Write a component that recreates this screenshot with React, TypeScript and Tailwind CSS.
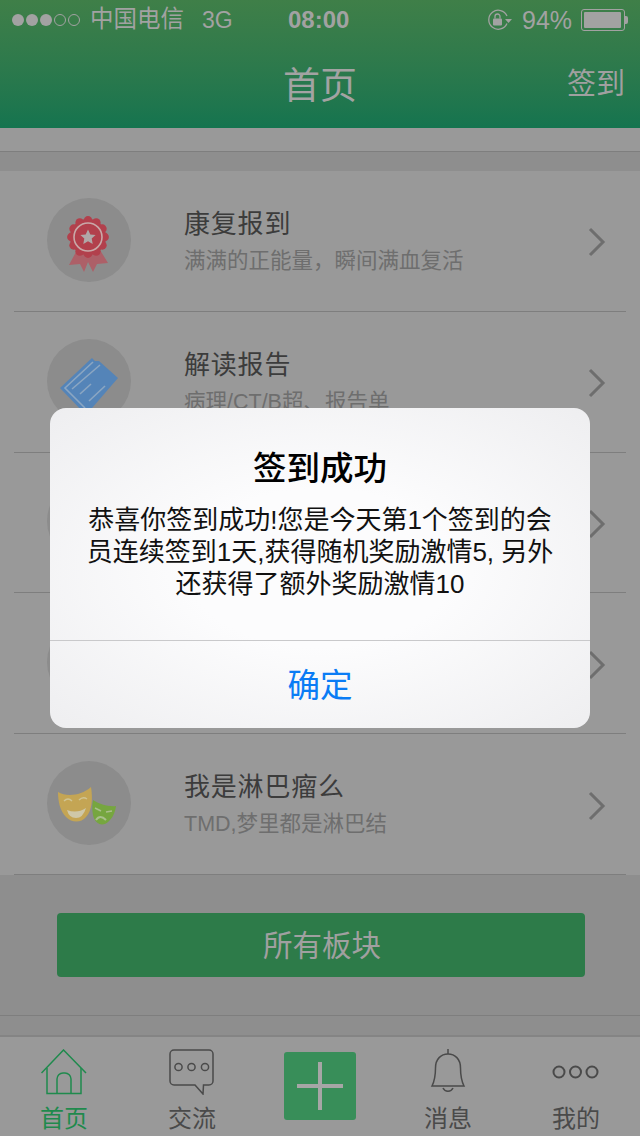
import React from 'react';

const FONT = "font-['Liberation_Sans','Noto_Sans_CJK_SC',sans-serif]";

function MedalIcon() {
  const bumps = Array.from({ length: 12 }, (_, i) => (i * Math.PI) / 6);
  return (
    <svg width="84" height="84" viewBox="0 0 84 84">
      <polygon points="30,52 22,67 33,66 37,74 41,64 46,74 50,66 61,65 53,52" fill="#ad6068" />
      <circle cx="41" cy="39" r="18" fill="#b2404c" />
      {bumps.map((a, i) => (
        <circle key={i} cx={41 + 16.5 * Math.cos(a)} cy={39 + 16.5 * Math.sin(a)} r="4.4" fill="#b2404c" />
      ))}
      <circle cx="41" cy="39" r="14" fill="none" stroke="#c9a8a8" strokeWidth="1.6" />
      <polygon
        points="41,31.5 43.3,36.4 48.6,37 44.7,40.6 45.7,45.9 41,43.3 36.3,45.9 37.3,40.6 33.4,37 38.7,36.4"
        fill="#b0a8a8"
      />
    </svg>
  );
}

function ReportIcon() {
  return (
    <svg width="84" height="84" viewBox="0 0 84 84">
      <polygon points="45,19 48,22 52,22 71,39 39,76 13,49" fill="#5484b8" />
      <g fill="none" stroke="#8ba6c2" strokeWidth="1.6">
        <polyline points="46,23 18,49 38,69" />
        <line x1="25" y1="50" x2="53" y2="26" />
        <line x1="33" y1="55" x2="44" y2="45" />
        <line x1="42" y1="62" x2="58" y2="47" />
      </g>
    </svg>
  );
}

function MasksIcon() {
  return (
    <svg width="84" height="84" viewBox="0 0 84 84">
      <path d="M11 31C19 36 34 35 44 26C46 38 45 50 39 56C34 62 25 62 19 56C13 50 11 40 11 31Z" fill="#c4a554" />
      <path d="M17 40Q21 36 25 40M32 39Q36 35 40 38" fill="none" stroke="#d0c493" strokeWidth="1.4" />
      <path d="M20 49Q30 53 39 47Q36 57 29 57Q22 57 20 49Z" fill="#cfc8a8" />
      <path d="M46 39C52 43 62 46 69 45C68 53 64 60 58 63C52 65 47 60 46 54C45 49 45 44 46 39Z" fill="#76a63f" />
      <path d="M48 47L54 50M59 51L65 50" fill="none" stroke="#a9bf8b" strokeWidth="1.6" />
      <path d="M49 59Q53 53 59 59" fill="none" stroke="#a9bf8b" strokeWidth="2" />
    </svg>
  );
}

function Chevron() {
  return (
    <svg className="mt-[3px]" width="18" height="30" viewBox="0 0 18 30" fill="none" stroke="#6e6e6e" strokeWidth="3">
      <polyline points="2,2 15,15 2,28" />
    </svg>
  );
}

const rows = [
  { title: '康复报到', sub: '满满的正能量，瞬间满血复活', icon: <MedalIcon /> },
  { title: '解读报告', sub: '病理/CT/B超、报告单', icon: <ReportIcon /> },
  { title: '', sub: '', icon: null },
  { title: '', sub: '', icon: null },
  { title: '我是淋巴瘤么', sub: 'TMD,梦里都是淋巴结', icon: <MasksIcon /> },
];

function StatusBar() {
  return (
    <div className="flex h-10 items-center text-[#a2a2a2]">
      <div className="ml-[12px] flex w-[70px] gap-[2.5px]">
        {[0, 1, 2].map((i) => (
          <span key={i} className="h-[11.5px] w-[11.5px] rounded-full bg-[#a2a2a2]" />
        ))}
        {[3, 4].map((i) => (
          <span key={i} className="h-[11.5px] w-[11.5px] rounded-full border border-[#a2a2a2]" />
        ))}
      </div>
      <span className="ml-[8px] w-[112px] text-[23.5px] leading-none">中国电信</span>
      <span className="w-[86px] text-[23px] leading-none">3G</span>
      <span className="w-[199px] text-[24px] font-bold leading-none">08:00</span>
      <svg width="26" height="22" viewBox="0 0 26 22" fill="none" stroke="#a2a2a2" strokeWidth="1.3">
        <path d="M20 14.5A9.5 9.5 0 1 1 20 7" />
        <polygon points="18,10 25,10 21.5,14" fill="#a2a2a2" stroke="none" />
        <rect x="6" y="9.5" width="9" height="7" rx="1" fill="#a2a2a2" stroke="none" />
        <path d="M8 9.5V7.500a2.500 2.500 0 0 1 5 0V9.5" />
      </svg>
      <span className="ml-[9px] w-[59px] text-[25px] leading-none">94%</span>
      <div className="flex items-center">
        <div className="h-[22px] w-[44px] rounded-[3px] border border-[#a2a2a2] p-[2px]">
          <div className="h-full w-[37px] rounded-[1px] bg-[#a2a2a2]" />
        </div>
        <div className="h-[8px] w-[3px] rounded-r-[2px] bg-[#a2a2a2]" />
      </div>
    </div>
  );
}

function HomeIcon() {
  return (
    <svg width="46" height="46" viewBox="0 0 46 46" fill="none" stroke="#1f8a4d" strokeWidth="1.5">
      <polyline points="0.5,24 22.5,1 45,24" />
      <path d="M6 19V44.5H40V19" />
      <path d="M16 44.5V30a6 6 0 0 1 6-6h2a6 6 0 0 1 6 6V44.5" />
    </svg>
  );
}

function ChatIcon() {
  return (
    <svg width="46" height="46" viewBox="0 0 46 46" fill="none" stroke="#4a4a4a" strokeWidth="1.5">
      <path d="M5 1H40a4 4 0 0 1 4 4V32a4 4 0 0 1-4 4H34.5L34 45L26 36H5a4 4 0 0 1-4-4V5a4 4 0 0 1 4-4Z" />
      <circle cx="9.5" cy="18" r="3.6" />
      <circle cx="22.5" cy="18" r="3.6" />
      <circle cx="36" cy="18" r="3.6" />
    </svg>
  );
}

function BellIcon() {
  return (
    <svg width="36" height="46" viewBox="0 0 36 46" fill="none" stroke="#4a4a4a" strokeWidth="1.5">
      <path d="M18 0V5" />
      <path d="M2 37H34C31 31 30.5 26 30.5 19C30.5 10 25 5 18 5C11 5 5.500 10 5.500 19C5.500 26 5 31 2 37Z" />
      <path d="M13 39a5.500 5.500 0 0 0 10 0" />
    </svg>
  );
}

function MoreIcon() {
  return (
    <svg width="48" height="46" viewBox="0 0 48 46" fill="none" stroke="#4a4a4a" strokeWidth="2">
      <circle cx="7" cy="23" r="5.500" />
      <circle cx="23.500" cy="23" r="5.500" />
      <circle cx="40" cy="23" r="5.500" />
    </svg>
  );
}

const tabs = [
  { label: '首页', icon: <HomeIcon />, active: true },
  { label: '交流', icon: <ChatIcon />, active: false },
  { label: '', icon: null, active: false },
  { label: '消息', icon: <BellIcon />, active: false },
  { label: '我的', icon: <MoreIcon />, active: false },
];

export default function App() {
  return (
    <div className={`relative flex h-[1136px] w-[640px] flex-col overflow-hidden bg-[#999999] ${FONT}`}>
      <header className="h-[128px] shrink-0 bg-gradient-to-b from-[#3f7f48] to-[#14744f]">
        <StatusBar />
        <div className="relative flex h-[88px] items-center justify-center pt-[5px]">
          <h1 className="text-[37px] leading-none font-normal text-[#a3a3a3]">首页</h1>
          <span className="absolute right-[15px] top-[30px] text-[29px] leading-none text-[#a0a0a0]">签到</span>
        </div>
      </header>

      <div className="h-[24px] shrink-0 border-b border-[#7e7e7e]" />
      <div className="h-[19px] shrink-0 bg-[#8e8e8e]" />

      <ul className="shrink-0">
        {rows.map((row, i) => (
          <li key={i} className="mx-[14px] flex h-[140.8px] items-center border-b border-[#7e7e7e] pl-[33px] pr-[20px]">
            <div className="mb-[2px] h-[84px] w-[84px] shrink-0 rounded-full bg-[#8c8c8c]">{row.icon}</div>
            <div className="ml-[53px] flex-1 pt-[4px]">
              <div className="mb-[14px] h-[26px] text-[26px] leading-none tracking-[0.8px] text-[#3c3c3c]">{row.title}</div>
              <div className="h-[24px] text-[21.5px] leading-none text-[#6e6e6e]">{row.sub}</div>
            </div>
            <Chevron />
          </li>
        ))}
      </ul>

      <div className="flex h-[141px] shrink-0 flex-col bg-[#8e8e8e]">
        <div className="ml-[57px] mr-[55px] mt-[38px] flex h-[64px] items-center justify-center rounded-[4px] bg-[#2d7b49] pt-[2px] pl-[2px] text-[29.5px] leading-none text-[#a0a0a0]">
          所有板块
        </div>
        <div className="mt-auto h-px bg-[#7e7e7e]" />
      </div>
      <div className="h-[21px] shrink-0 border-b-2 border-[#848484] bg-[#8e8e8e]" />

      <nav className="grid flex-1 grid-cols-5 bg-[#999999]">
        {tabs.map((tab, i) =>
          tab.icon ? (
            <div key={i} className="flex flex-col items-center pt-[12px]">
              <div className="flex h-[46px] items-center justify-center">{tab.icon}</div>
              <span className={`mt-[12px] text-[24px] leading-none ${tab.active ? 'text-[#1f8a4d]' : 'text-[#4a4a4a]'}`}>
                {tab.label}
              </span>
            </div>
          ) : (
            <div key={i} className="flex justify-center pt-[15px]">
              <div className="flex h-[68px] w-[72px] items-center justify-center rounded-[3px] bg-[#388e59]">
                <svg width="46" height="48" viewBox="0 0 46 48" fill="#a6a6a6">
                  <rect x="21" y="0" width="4" height="48" />
                  <rect x="0" y="22" width="46" height="4" />
                </svg>
              </div>
            </div>
          )
        )}
      </nav>

      <div className="absolute inset-0 flex items-center justify-center">
        <div className="flex h-[320px] w-[540px] flex-col rounded-[16px] bg-[radial-gradient(ellipse_at_center,#fcfcfd_35%,#eeeef0_100%)]">
          <div className="flex h-[233px] flex-col items-center border-b border-[#c9c9cb] px-[36px] pt-[44px]">
            <h2 className="text-[33.5px] leading-none font-medium text-black">签到成功</h2>
            <p className="mt-[18px] text-center text-[26px] leading-[32px] text-[#111111]">
              恭喜你签到成功!您是今天第1个签到的会员连续签到1天,获得随机奖励激情5, 另外还获得了额外奖励激情10
            </p>
          </div>
          <button className="flex flex-1 items-center justify-center pt-[3px] text-[32.5px] leading-none font-normal text-[#0a7cf5]">
            确定
          </button>
        </div>
      </div>
    </div>
  );
}
